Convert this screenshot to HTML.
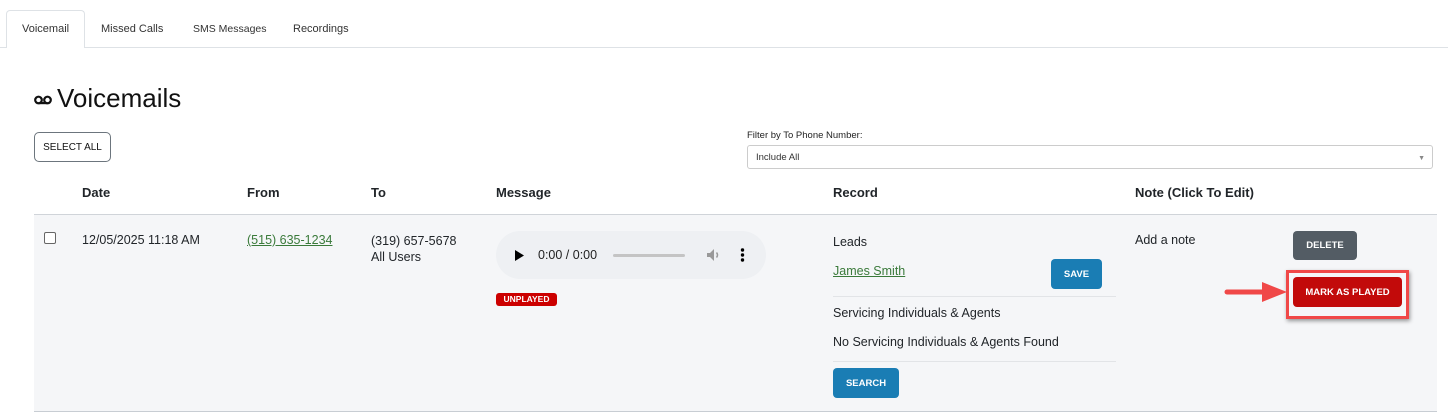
<!DOCTYPE html>
<html><head><style>
*{margin:0;padding:0;box-sizing:border-box}
body{width:1448px;height:414px;background:#fff;font-family:"Liberation Sans",sans-serif;color:#212529;position:relative;overflow:hidden}
.a{position:absolute;white-space:nowrap}
.tab{font-size:11px;color:#333;top:23px}
.btn{position:absolute;border-radius:4px;color:#fff;font-weight:bold;font-size:9.5px;text-align:center;display:flex;align-items:center;justify-content:center}
.th{font-weight:bold;font-size:13px;top:185px}
.td{font-size:12.5px}
</style></head><body>
<div class="a" style="left:0;top:47px;width:1448px;height:1px;background:#dee2e6"></div>
<div class="a" style="left:6px;top:10px;width:79px;height:38px;border:1px solid #dee2e6;border-bottom:none;border-radius:4px 4px 0 0;background:#fff"></div>
<div class="a tab" style="left:22px">Voicemail</div>
<div class="a tab" style="left:101px">Missed Calls</div>
<div class="a tab" style="left:193px;font-size:10.5px">SMS Messages</div>
<div class="a tab" style="left:293px">Recordings</div>

<svg class="a" style="left:34px;top:95px" width="18" height="10" viewBox="0 0 18 10"><circle cx="4.5" cy="5" r="3.3" fill="none" stroke="#111" stroke-width="2.2"/><circle cx="13.5" cy="5" r="3.3" fill="none" stroke="#111" stroke-width="2.2"/><rect x="4.5" y="7" width="9" height="2.2" fill="#111"/></svg>
<div class="a" style="left:57px;top:83px;font-size:26px;color:#111">Voicemails</div>

<div class="a" style="left:34px;top:132px;width:77px;height:30px;border:1px solid #6c757d;border-radius:5px;font-size:10px;text-align:center;line-height:29px;color:#111">SELECT ALL</div>

<div class="a" style="left:747px;top:130px;font-size:9.5px;color:#222">Filter by To Phone Number:</div>
<div class="a" style="left:747px;top:145px;width:686px;height:24px;border:1px solid #ccc;border-radius:3px;font-size:9.5px;line-height:23px;padding-left:8px;color:#333">Include All<span style="position:absolute;right:7px;top:1px;font-size:7px;color:#888">▼</span></div>

<div class="a th" style="left:82px">Date</div>
<div class="a th" style="left:247px">From</div>
<div class="a th" style="left:371px">To</div>
<div class="a th" style="left:496px">Message</div>
<div class="a th" style="left:833px">Record</div>
<div class="a th" style="left:1135px">Note (Click To Edit)</div>

<div class="a" style="left:34px;top:214px;width:1403px;height:198px;background:#f5f6f8;border-top:1px solid #d0d4d9;border-bottom:1px solid #c8cdd3"></div>
<div class="a" style="left:44px;top:232px;width:12px;height:12px;border:1px solid #666;border-radius:2px;background:#fff"></div>
<div class="a td" style="left:82px;top:233px">12/05/2025 11:18 AM</div>
<div class="a td" style="left:247px;top:233px;color:#3a7a3a;text-decoration:underline">(515) 635-1234</div>
<div class="a td" style="left:371px;top:233px;line-height:16px">(319) 657-5678<br>All Users</div>

<div class="a" style="left:496px;top:231px;width:270px;height:48px;border-radius:24px;background:#eef0f3"></div>
<svg class="a" style="left:515px;top:250px" width="9" height="11"><path d="M0 0L9 5.5L0 11Z" fill="#000"/></svg>
<div class="a" style="left:538px;top:248px;font-size:12.5px;color:#222">0:00 / 0:00</div>
<div class="a" style="left:613px;top:254px;width:72px;height:3px;background:#c4c4c4;border-radius:2px"></div>
<svg class="a" style="left:706px;top:248px" width="16" height="14" viewBox="0 0 16 14"><path d="M1 5H4L8 1V13L4 9H1Z" fill="#999"/><path d="M10.5 4.5Q12.5 7 10.5 9.5" stroke="#999" stroke-width="1.5" fill="none"/></svg>
<svg class="a" style="left:740px;top:248px" width="5" height="14"><circle cx="2.5" cy="2" r="1.7"/><circle cx="2.5" cy="7" r="1.7"/><circle cx="2.5" cy="12" r="1.7"/></svg>
<div class="a" style="left:496px;top:293px;width:61px;height:13px;background:#c00;border-radius:3px;color:#fff;font-size:8.5px;font-weight:bold;text-align:center;line-height:13px">UNPLAYED</div>

<div class="a td" style="left:833px;top:235px">Leads</div>
<div class="a td" style="left:833px;top:264px;color:#3a7a3a;text-decoration:underline">James Smith</div>
<div class="btn" style="left:1051px;top:259px;width:51px;height:30px;background:#1a7db4">SAVE</div>
<div class="a" style="left:833px;top:296px;width:283px;height:1px;background:#e2e4e7"></div>
<div class="a td" style="left:833px;top:306px">Servicing Individuals &amp; Agents</div>
<div class="a td" style="left:833px;top:335px">No Servicing Individuals &amp; Agents Found</div>
<div class="a" style="left:833px;top:361px;width:283px;height:1px;background:#e2e4e7"></div>
<div class="btn" style="left:833px;top:368px;width:66px;height:30px;background:#1a7db4">SEARCH</div>

<div class="a td" style="left:1135px;top:233px">Add a note</div>
<div class="btn" style="left:1293px;top:231px;width:64px;height:29px;background:#535c64">DELETE</div>
<div class="a" style="left:1286px;top:270px;width:123px;height:49px;border:3px solid #f04848;box-shadow:1px 2px 4px rgba(0,0,0,.4)"></div>
<div class="btn" style="left:1293px;top:277px;width:109px;height:30px;background:#c20a0a">MARK AS PLAYED</div>
<svg class="a" style="left:1224px;top:280px" width="64" height="24" viewBox="0 0 64 24"><path d="M3 12H42" stroke="#f04848" stroke-width="5" stroke-linecap="round"/><path d="M38 2L63 12L38 22Z" fill="#f04848"/></svg>
</body></html>
